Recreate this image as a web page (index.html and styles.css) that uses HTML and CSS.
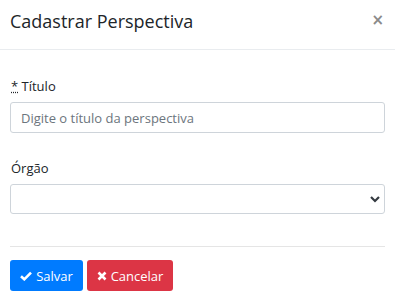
FILE: index.html
```html
<!DOCTYPE html>
<html lang="pt-BR">
<head>
<meta charset="utf-8">
<link rel="stylesheet" href="styles.css">
</head>
<body>
<div class="modal">
  <div class="modal-header">
    <h5 class="modal-title">Cadastrar Perspectiva</h5>
    <button class="close" type="button">&times;</button>
  </div>
  <div class="modal-body">
    <div class="form-group">
      <label class="label"><abbr title="obrigatório">*</abbr> Título</label>
      <input class="form-control" type="text" placeholder="Digite o título da perspectiva">
    </div>
    <div class="form-group second">
      <label class="label">Órgão</label>
      <div class="select">
        <svg class="chev" width="10" height="8" viewBox="0 0 10 8"><path d="M1 2 L5 6 L9 2" fill="none" stroke="#343a40" stroke-width="2.2"/></svg>
      </div>
    </div>
  </div>
  <div class="modal-footer">
    <button class="btn btn-primary" type="button"><svg class="ico" width="12" height="10" viewBox="0 0 12 10"><path d="M1 5.2 L4.3 8.3 L11 1.6" fill="none" stroke="#fff" stroke-width="2.6"/></svg>Salvar</button>
    <button class="btn btn-danger" type="button"><svg class="ico" width="10" height="10" viewBox="0 0 10 10"><path d="M1.5 1.5 L8.5 8.5 M8.5 1.5 L1.5 8.5" fill="none" stroke="#fff" stroke-width="2.6"/></svg>Cancelar</button>
  </div>
</div>
</body>
</html>
```

FILE: styles.css
```css
html, body {
  margin: 0;
  padding: 0;
  background: #fff;
}
body {
  font-family: "Open Sans", "Noto Sans", sans-serif;
  font-size: 13px;
  color: #212529;
}
.modal {
  width: 395px;
}
.modal-header {
  display: flex;
  align-items: center;
  justify-content: space-between;
  padding: 0 10px;
  border-bottom: 1px solid #e9ecef;
  box-sizing: border-box;
  height: 50px;
}
.modal-title {
  margin: 0;
  font-size: 18px;
  font-weight: 400;
  line-height: 1.2;
  margin-top: -6px;
}
.close {
  border: 0;
  background: none;
  padding: 0;
  font-family: "DejaVu Sans", sans-serif;
  font-size: 15px;
  font-weight: 700;
  color: #8a8a8a;
  line-height: 1;
  margin-top: -8px;
  margin-right: 1px;
}
.modal-body {
  padding: 26px 10px 0;
}
.form-group {
  display: flex;
  flex-direction: column;
}
.form-group.second {
  margin-top: 25px;
}
.label {
  line-height: 21px;
  margin-bottom: 5px;
  padding-left: 1px;
}
abbr {
  text-decoration: underline dotted;
  cursor: help;
}
.form-control {
  box-sizing: border-box;
  height: 31px;
  margin: 0;
  padding: 0 10px;
  border: 1px solid #ced4da;
  border-radius: 3px;
  font-family: inherit;
  font-size: 13px;
  color: #495057;
}
.form-control::placeholder {
  color: #6c757d;
  opacity: 1;
}
.select {
  box-sizing: border-box;
  height: 30px;
  border: 1px solid #ced4da;
  border-radius: 3px;
  display: flex;
  align-items: center;
  justify-content: flex-end;
  padding-right: 4px;
}
.modal-footer {
  margin: 32px 10px 0;
  border-top: 1px solid #e5e5e5;
  padding-top: 13px;
  display: flex;
  gap: 4px;
}
.btn {
  box-sizing: border-box;
  height: 31px;
  border: 0;
  border-radius: 3px;
  color: #fff;
  font-family: inherit;
  font-size: 13px;
  display: inline-flex;
  align-items: center;
  justify-content: center;
  gap: 4px;
  padding: 0;
}
.btn-primary {
  background: #007bff;
  width: 73px;
}
.btn-danger {
  background: #dc3545;
  width: 86px;
}
.ico {
  display: block;
}
```
